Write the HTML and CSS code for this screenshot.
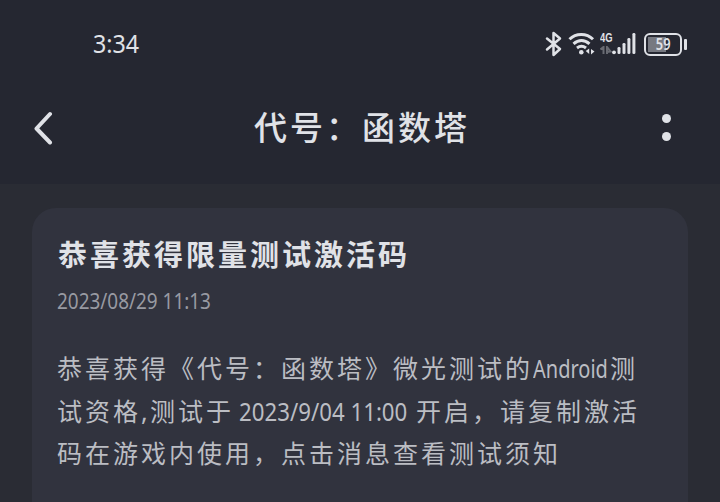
FILE: index.html
```html
<!DOCTYPE html>
<html lang="zh-CN">
<head>
  <meta charset="UTF-8" />
  <meta name="viewport" content="width=device-width, initial-scale=1.0" />
  <title>代号：函数塔</title>
  <link rel="stylesheet" href="styles.css">
</head>
<body>
  <header class="top">
    <!-- Status bar -->
    <div class="status-bar">
      <div class="clock">3:34</div>
      <div class="status-icons">
        <svg class="bluetooth" width="17" height="26" viewBox="0 0 17 26">
          <path d="M2 7.5 L15 18 L8.5 24 V2 L15 7.5 L2 18.5" />
        </svg>
        <svg class="wifi" width="28" height="24" viewBox="0 0 28 24">
          <path d="M1.5 7.3 C8 0.8 18.5 0.8 25 7.3" />
          <path d="M5.5 11.8 C10.5 7.5 16.5 7.5 21.5 11.8" />
          <path d="M9 16 C12 13.7 15 13.7 18 16" />
          <circle cx="13.3" cy="20.2" r="2.3" />
          <path class="solid" d="M21.2 16.5 V22 L17.7 19 Z M23 17 V22.5 L26.5 19.5 Z" />
        </svg>
        <div class="network">
          <span class="network-type">4G</span>
          <svg width="12" height="9" viewBox="0 0 12 9">
            <path d="M0.5 3.5 L3.5 1 V8 M7 8 V1 L10.5 5.5 L7 6" />
          </svg>
        </div>
        <svg class="signal" width="24" height="24" viewBox="0 0 24 24">
          <circle cx="2" cy="20.3" r="1.9" />
          <rect x="5.5" y="15" width="3" height="7" rx="1.3" />
          <rect x="10.5" y="11" width="3" height="11" rx="1.3" />
          <rect x="15.4" y="6" width="3" height="16" rx="1.3" />
          <rect x="20.4" y="1" width="3" height="21" rx="1.3" />
        </svg>
        <div class="battery"><span>59</span></div>
        <div class="battery-cap"></div>
      </div>
    </div>

    <!-- Title bar -->
    <div class="title-bar">
      <svg class="back" width="20" height="34" viewBox="0 0 20 34">
        <path d="M17 3 L3.5 17.5 L17 31.5" />
      </svg>
      <h1>代号：函数塔</h1>
      <div class="more"><i></i><i></i></div>
    </div>
  </header>

  <main>
    <div class="card">
      <h2>恭喜获得限量测试激活码</h2>
      <div class="time"><span class="latin">2023/08/29 11:13</span></div>
      <div class="message">
        <p>恭喜获得《代号：函数塔》微光测试的<span class="slot name"><span class="latin">Android</span></span>测</p>
        <p>试资格<span class="slot comma">,</span>测试于<span class="slot date"><span class="latin">2023/9/04 11:00</span></span>开启，请复制激活</p>
        <p>码在游戏内使用，点击消息查看测试须知</p>
      </div>
    </div>
  </main>
</body>
</html>
```

FILE: styles.css
```css
body, html {
  height: 100%;
  margin: 0;
}

body {
  background: #2a2c34;
  color: #e0e2e7;
  font-family: "Noto Sans", "Noto Sans CJK SC", sans-serif;
}

h1, h2, p {
  margin: 0;
}

.top {
  height: 184px;
  background: #252731;
}

.status-bar {
  display: flex;
  justify-content: space-between;
  align-items: center;
  height: 88px;
  padding: 0 33px 0 93px;
}

.clock {
  margin-top: -3px;
  font-size: 25px;
  transform: scaleX(0.93);
  transform-origin: left;
}

.status-icons {
  display: flex;
  align-items: center;
}

.status-icons svg {
  fill: #e0e2e7;
}

.status-icons .bluetooth {
  fill: none;
  stroke: #e0e2e7;
  stroke-width: 2.5;
  stroke-linejoin: round;
  stroke-linecap: round;
  margin-right: 6px;
}

.status-icons .wifi {
  fill: none;
  stroke: #e0e2e7;
  stroke-width: 3;
  margin-right: 4px;
}

.wifi circle, .wifi .solid {
  fill: #e0e2e7;
  stroke: none;
}

.network {
  display: flex;
  flex-direction: column;
  width: 12px;
  height: 24px;
}

.network-type {
  font: bold 12px/12px "Liberation Sans", sans-serif;
  transform: scaleX(0.78);
  transform-origin: left;
}

.status-icons .network svg {
  margin-top: 2px;
  fill: none;
  stroke: #696b73;
  stroke-width: 2;
}

.signal {
  margin-right: 8px;
}

.battery {
  box-sizing: border-box;
  width: 38px;
  height: 23px;
  border: 2px solid #e0e2e7;
  border-radius: 6px;
  padding: 2px;
  font-size: 16px;
  font-weight: 600;
  line-height: 15px;
  text-align: center;
  background: linear-gradient(#777981, #777981) 2px 2px / 18px 15px no-repeat;
}

.battery span {
  display: inline-block;
  transform: scaleX(0.8);
}

.battery-cap {
  width: 3px;
  height: 11px;
  margin-left: 2px;
  border-radius: 1px;
  background: #e0e2e7;
}

.title-bar {
  display: flex;
  justify-content: space-between;
  align-items: center;
  height: 80px;
  padding: 0 49px 0 33px;
}

.back {
  fill: none;
  stroke: #e0e2e7;
  stroke-width: 4;
  stroke-linecap: round;
  stroke-linejoin: round;
}

h1 {
  padding-left: 9px;
  font-size: 33px;
  font-weight: 500;
  line-height: 48px;
  letter-spacing: 3px;
}

.more {
  display: flex;
  flex-direction: column;
  gap: 9px;
  width: 9px;
  margin-top: -2px;
}

.more i {
  width: 9px;
  height: 9px;
  border-radius: 50%;
  background: #e0e2e7;
}

main {
  padding: 24px 32px 0;
}

.card {
  box-sizing: border-box;
  height: 294px;
  padding: 27px 25px 0;
  border-radius: 24px 24px 0 0;
  background: #31333e;
}

h2 {
  padding-left: 1px;
  font-size: 29px;
  font-weight: 700;
  line-height: 40px;
  letter-spacing: 3px;
  white-space: nowrap;
}

.latin {
  display: inline-block;
  white-space: nowrap;
  transform: scaleX(0.8);
  transform-origin: left;
}

.time {
  height: 32px;
  margin-top: 9px;
  color: #989aa2;
  font-size: 22px;
  line-height: 32px;
}

.time .latin {
  transform: scaleX(0.86);
}

.message {
  margin-top: 31px;
  color: #bbbdc3;
  font-size: 25px;
  letter-spacing: 3px;
}

.message p {
  height: 42.5px;
  line-height: 43px;
  white-space: nowrap;
}

.slot {
  display: inline-block;
  letter-spacing: 0;
}

.name {
  width: 77px;
}

.comma {
  width: 9px;
}

.date {
  width: 177px;
  padding-left: 5px;
}

.date .latin {
  transform: scaleX(0.89);
}
```
